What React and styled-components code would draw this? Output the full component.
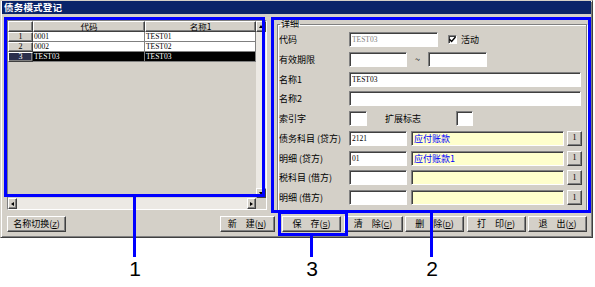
import React from 'react'
import styled, { createGlobalStyle, css } from 'styled-components'

const GRAY = '#d4d0c8'
const NAVY = '#0a246a'
const MARK = '#0000ff'
const UI_FONT = '"Noto Sans CJK SC", "Liberation Sans", sans-serif'
const DATA_FONT = '"Liberation Serif", "Noto Sans CJK SC", serif'

const GlobalStyle = createGlobalStyle`
  html, body {
    margin: 0;
    padding: 0;
    background: #fff;
  }
  body {
    font-family: ${UI_FONT};
    -webkit-font-smoothing: none;
  }
  * {
    box-sizing: border-box;
  }
`

const raised = css`
  border: 1px solid;
  border-color: #fff #404040 #404040 #fff;
  box-shadow: inset -1px -1px #808080;
  background: ${GRAY};
`

const sunken = css`
  border: 1px solid;
  border-color: #808080 #fff #fff #808080;
  box-shadow: inset 1px 1px #404040;
`

const Page = styled.div`
  position: relative;
  width: 595px;
  height: 287px;
  overflow: hidden;
`

const Window = styled.div`
  width: 593px;
  height: 238px;
  background: ${GRAY};
  border: 1px solid;
  border-color: ${GRAY} #404040 #404040 ${GRAY};
  box-shadow: inset 1px 1px #fff, inset -1px -1px #808080;
  padding: 0 1px 1px 1px;
  display: flex;
  flex-direction: column;
`

const TitleBar = styled.div`
  height: 13px;
  background: ${NAVY};
  color: #fff;
  font-size: 9.5px;
  font-weight: 700;
  line-height: 13px;
  padding-left: 2px;
  letter-spacing: 0.2px;
`

const Body = styled.div`
  display: flex;
  flex-direction: column;
  padding: 5px 4px 0 5px;
`

const Main = styled.div`
  display: flex;
  gap: 10px;
  height: 192px;
`

/* ---------- grid ---------- */

const GridFrame = styled.div`
  ${sunken};
  box-shadow: none;
  margin-top: 1px;
  width: 260px;
  height: 190px;
  display: flex;
  flex-direction: column;
  background: ${GRAY};
`

const GridTop = styled.div`
  flex: 1;
  display: flex;
  min-height: 0;
`

const Table = styled.div`
  width: 248px;
  display: grid;
  grid-template-columns: 25px 112px 111px;
  grid-auto-rows: 10px;
  grid-template-rows: 11px;
  align-content: start;
`

const HeadCell = styled.div`
  ${raised};
  font-size: 8.5px;
  line-height: 9px;
  text-align: center;
  color: #000;
  overflow: hidden;
  white-space: nowrap;
`

const RowHead = styled(HeadCell)`
  font-family: ${DATA_FONT};
  font-size: 8px;
  line-height: 8px;
  background: ${p => (p.$selected ? '#2b2f4c' : GRAY)};
  color: ${p => (p.$selected ? '#fff' : '#000')};
`

const Cell = styled.div`
  font-family: ${DATA_FONT};
  font-size: 7.5px;
  line-height: 9px;
  padding-left: 1px;
  background: ${p => (p.$selected ? '#000' : '#fff')};
  color: ${p => (p.$selected ? '#fff' : '#000')};
  border-right: 1px solid #808080;
  border-bottom: 1px solid #808080;
  white-space: nowrap;
  overflow: hidden;
`

const VScroll = styled.div`
  width: 10px;
  display: flex;
  flex-direction: column;
  background: #ece9e4;
`

const HScrollRow = styled.div`
  height: 11px;
  display: flex;
`

const HScroll = styled.div`
  flex: 1;
  display: flex;
  background: #ece9e4;
`

const Track = styled.div`
  flex: 1;
`

const ScrollBtn = styled.div`
  ${raised};
  width: ${p => p.$w || 10}px;
  height: ${p => p.$h || 11}px;
  display: flex;
  align-items: center;
  justify-content: center;
`

const Corner = styled.div`
  width: 10px;
  background: ${GRAY};
`

const Arrow = styled.span`
  width: 0;
  height: 0;
  border: 2px solid transparent;
  ${p => p.$dir === 'up' && css`border-bottom: 3px solid #000; border-top-width: 0;`}
  ${p => p.$dir === 'down' && css`border-top: 3px solid #000; border-bottom-width: 0;`}
  ${p => p.$dir === 'left' && css`border-right: 3px solid #000; border-left-width: 0;`}
  ${p => p.$dir === 'right' && css`border-left: 3px solid #000; border-right-width: 0;`}
`

/* ---------- detail group ---------- */

const Group = styled.fieldset`
  margin: 0;
  width: 310px;
  height: 192px;
  padding: 3px 4px 0 1px;
  border: 1px solid #808080;
  box-shadow: inset 1px 1px #fff, 1px 1px #fff;
`

const Legend = styled.legend`
  font-size: 9px;
  line-height: 10px;
  padding: 0 1px;
  margin-left: 1px;
  color: #000;
`

const Form = styled.div`
  display: flex;
  flex-direction: column;
  gap: 4.75px;
`

const Row = styled.div`
  display: flex;
  align-items: center;
  height: 15px;
`

const Label = styled.span`
  width: ${p => p.$w || 70}px;
  margin-left: ${p => p.$ml || 0}px;
  font-size: 9px;
  line-height: 11px;
  color: #000;
  white-space: nowrap;
  flex-shrink: 0;
`

const Field = styled.input`
  ${sunken};
  width: ${p => p.$w}px;
  height: 15px;
  margin: 0 ${p => p.$mr || 0}px 0 0;
  padding: 0 2px;
  background: ${p => (p.$yellow ? '#ffffcc' : '#fff')};
  color: ${p => (p.$yellow ? MARK : p.disabled ? '#808080' : '#000')};
  font-family: ${p => (p.$yellow ? UI_FONT : DATA_FONT)};
  font-size: ${p => (p.$yellow ? 9 : 7.5)}px;
  outline: none;
  flex-shrink: 0;
  &:disabled {
    background: #fff;
  }
`

const Tilde = styled.span`
  width: 21px;
  text-align: center;
  font-size: 9px;
  color: #000;
`

const Check = styled.span`
  ${sunken};
  width: 9px;
  height: 9px;
  background: #fff;
  margin: 0 4px 0 10px;
  display: flex;
  align-items: center;
  justify-content: center;
`

const PickBtn = styled.button`
  ${raised};
  width: 15px;
  height: 15px;
  padding: 0;
  margin-left: 3px;
  font-family: ${DATA_FONT};
  font-size: 8px;
  line-height: 10px;
  color: #000;
`

/* ---------- buttons ---------- */

const ButtonBar = styled.div`
  display: flex;
  align-items: center;
  margin-top: 5px;
  height: 16px;
  padding-right: 0;
`

const ButtonGroup = styled.div`
  margin-left: auto;
  display: flex;
  gap: 2.5px;
`

const Btn = styled.button`
  ${raised};
  width: ${p => p.$w || 59}px;
  height: 16px;
  margin-right: ${p => p.$mr || 0}px;
  padding: 0;
  font-family: ${UI_FONT};
  font-size: 9px;
  line-height: 12px;
  color: #000;
  white-space: pre;
`

const Key = styled.span`
  font-family: "Liberation Sans", sans-serif;
  font-size: 7.5px;
  text-decoration: underline;
`

/* ---------- annotation overlay ---------- */

const MarkBox = styled.div`
  position: absolute;
  left: ${p => p.$x}px;
  top: ${p => p.$y}px;
  width: ${p => p.$w}px;
  height: ${p => p.$h}px;
  border: 3px solid ${MARK};
  pointer-events: none;
`

const MarkLine = styled.div`
  position: absolute;
  left: ${p => p.$x}px;
  top: ${p => p.$y}px;
  width: 3px;
  height: ${p => p.$h}px;
  background: ${MARK};
`

const MarkNum = styled.div`
  position: absolute;
  left: ${p => p.$x - 10}px;
  top: 258px;
  width: 20px;
  text-align: center;
  font-family: "Liberation Sans", Arial, sans-serif;
  font-size: 21px;
  line-height: 21px;
  color: #000;
`

const ROWS = [
  { n: 1, code: '0001', name: 'TEST01' },
  { n: 2, code: '0002', name: 'TEST02' },
  { n: 3, code: 'TEST03', name: 'TEST03', selected: true }
]

const SUBJECTS = [
  { label: '债务科目 (贷方)', code: '2121', name: '应付账款' },
  { label: '明细 (贷方)', code: '01', name: '应付账款1' },
  { label: '税科目 (借方)', code: '', name: '' },
  { label: '明细 (借方)', code: '', name: '' }
]

const ACTIONS = [
  { text: '新　建', key: 'N', w: 55, mr: 5 },
  { text: '保　存', key: 'S' },
  { text: '清　除', key: 'C' },
  { text: '删　除', key: 'D' },
  { text: '打　印', key: 'P' },
  { text: '退　出', key: 'X' }
]

const DataGrid = () => (
  <GridFrame>
    <GridTop>
      <Table>
        <HeadCell />
        <HeadCell>代码</HeadCell>
        <HeadCell>名称1</HeadCell>
        {ROWS.map(r => (
          <React.Fragment key={r.n}>
            <RowHead $selected={r.selected}>{r.n}</RowHead>
            <Cell $selected={r.selected}>{r.code}</Cell>
            <Cell $selected={r.selected}>{r.name}</Cell>
          </React.Fragment>
        ))}
      </Table>
      <VScroll>
        <ScrollBtn>
          <Arrow $dir='up' />
        </ScrollBtn>
        <Track />
        <ScrollBtn $h={10}>
          <Arrow $dir='down' />
        </ScrollBtn>
      </VScroll>
    </GridTop>
    <HScrollRow>
      <HScroll>
        <ScrollBtn $w={9}>
          <Arrow $dir='left' />
        </ScrollBtn>
        <Track />
        <ScrollBtn $w={9}>
          <Arrow $dir='right' />
        </ScrollBtn>
      </HScroll>
      <Corner />
    </HScrollRow>
  </GridFrame>
)

const Detail = () => (
  <Group>
    <Legend>详细</Legend>
    <Form>
      <Row>
        <Label>代码</Label>
        <Field $w={89} value='TEST03' disabled readOnly />
        <Check>
          <svg width='7' height='7' viewBox='0 0 7 7'>
            <path d='M0.5 3.2 L2.6 5.4 L6.5 1' stroke='#000' strokeWidth='1.4' fill='none' />
          </svg>
        </Check>
        <Label $w={30}>活动</Label>
      </Row>
      <Row>
        <Label>有效期限</Label>
        <Field $w={58} value='' readOnly />
        <Tilde>~</Tilde>
        <Field $w={59} value='' readOnly />
      </Row>
      <Row>
        <Label>名称1</Label>
        <Field $w={232} value='TEST03' readOnly />
      </Row>
      <Row>
        <Label>名称2</Label>
        <Field $w={232} value='' readOnly />
      </Row>
      <Row>
        <Label>索引字</Label>
        <Field $w={18} value='' readOnly />
        <Label $w={71} $ml={18}>扩展标志</Label>
        <Field $w={17} value='' readOnly />
      </Row>
      {SUBJECTS.map(s => (
        <Row key={s.label}>
          <Label>{s.label}</Label>
          <Field $w={58} $mr={4} value={s.code} readOnly />
          <Field $w={153} $yellow value={s.name} readOnly />
          <PickBtn>1</PickBtn>
        </Row>
      ))}
    </Form>
  </Group>
)

export default function App() {
  return (
    <Page>
      <GlobalStyle />
      <Window>
        <TitleBar>债务模式登记</TitleBar>
        <Body>
          <Main>
            <DataGrid />
            <Detail />
          </Main>
          <ButtonBar>
            <Btn>
              名称切换(<Key>Z</Key>)
            </Btn>
            <ButtonGroup>
              {ACTIONS.map(a => (
                <Btn key={a.key} $w={a.w} $mr={a.mr}>
                  {a.text}(<Key>{a.key}</Key>)
                </Btn>
              ))}
            </ButtonGroup>
          </ButtonBar>
        </Body>
      </Window>

      <MarkBox $x={4} $y={17} $w={261} $h={180} />
      <MarkBox $x={271} $y={17} $w={320} $h={196} />
      <MarkBox $x={278} $y={211} $w={70} $h={25} />
      <MarkLine $x={133} $y={197} $h={60} />
      <MarkLine $x={310} $y={236} $h={21} />
      <MarkLine $x={430} $y={213} $h={44} />
      <MarkNum $x={135}>1</MarkNum>
      <MarkNum $x={312}>3</MarkNum>
      <MarkNum $x={432}>2</MarkNum>
    </Page>
  )
}
